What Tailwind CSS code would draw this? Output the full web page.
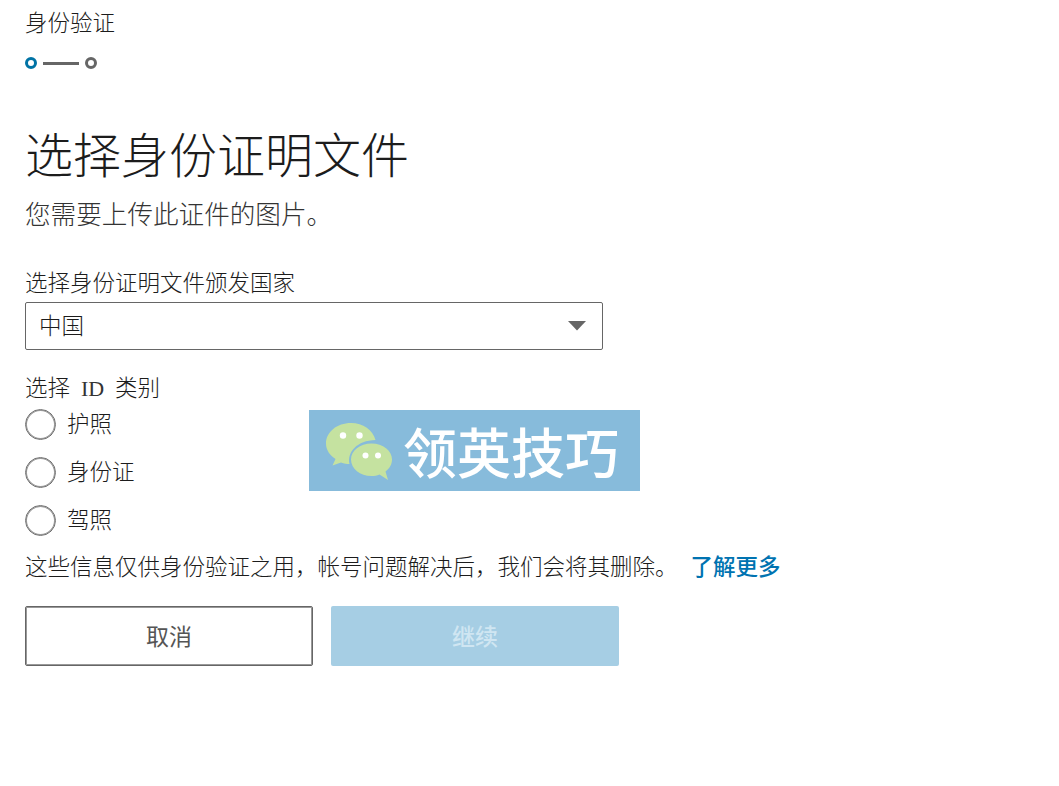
<!DOCTYPE html>
<html lang="zh-CN">
<head>
  <meta charset="UTF-8">
  <title>身份验证</title>
  <script src="https://cdn.jsdelivr.net/npm/@tailwindcss/browser@4"></script>
</head>
<body class="bg-white text-[#1c1c1c] font-['Noto_Sans_CJK_SC',sans-serif] font-light text-[22.5px] leading-8 whitespace-nowrap overflow-hidden">

  <main class="pl-[25px] pt-[5px]">
    <!-- Progress -->
    <p>身份验证</p>
    <div class="flex items-center gap-1.5 h-3 mt-5">
      <span class="size-3 rounded-full border-3 border-[#0073a5]"></span>
      <span class="w-9 h-[3px] bg-[#666]"></span>
      <span class="size-3 rounded-full border-3 border-[#666]"></span>
    </div>

    <h1 class="text-[48px] leading-[60px] mt-[53px]">选择身份证明文件</h1>
    <p class="text-[25.6px] leading-9 mt-[13px] text-[#333]">您需要上传此证件的图片。</p>

    <form>
      <!-- Country -->
      <label class="block mt-[34px]">选择身份证明文件颁发国家</label>
      <div class="w-[578px] h-12 mt-[5px] pl-[13px] pr-4 flex items-center justify-between border border-[#666] rounded-xs">
        <span class="pb-1">中国</span>
        <svg class="w-[18px] h-[10px]" viewBox="0 0 18 10" fill="#666"><path d="M0 0h18L9 9.5z"/></svg>
      </div>

      <!-- ID type -->
      <div class="relative mt-5">
        <p class="h-8">选择<span class="inline-block w-[45px] text-center font-['Liberation_Serif',serif] text-[22px] leading-none text-[#333]">ID</span>类别</p>
        <div class="flex flex-col gap-[17px] mt-[7px]">
          <label class="flex items-center gap-[11px] h-[31px]"><span class="size-[31px] rounded-full border border-[#707070] inset-ring inset-ring-[#999]"></span><span class="pb-1.5">护照</span></label>
          <label class="flex items-center gap-[11px] h-[31px]"><span class="size-[31px] rounded-full border border-[#707070] inset-ring inset-ring-[#999]"></span><span class="pb-1.5">身份证</span></label>
          <label class="flex items-center gap-[11px] h-[31px]"><span class="size-[31px] rounded-full border border-[#707070] inset-ring inset-ring-[#999]"></span><span class="pb-1.5">驾照</span></label>
        </div>

        <!-- Watermark over the form -->
        <div class="absolute left-[284px] top-10 w-[331px] h-[81px] bg-[#87bbdb] flex items-center pl-[17px]">
          <svg class="w-[66px] h-[58px] mt-0.5" viewBox="0 0 66 58">
            <path fill="#c5e2a0" d="M25 0C11 0 0 9 0 20.500C0 27 4 32.500 9.500 36L6.500 42.500L15 39.500C18 40.500 21 41 23.500 41C21 29 31 17.500 49.500 17C47 7 37 0 25 0z"/>
            <path fill="#c5e2a0" d="M45.500 20.500C34 20.500 25 27.500 25 36.500C25 45.500 34 53 45.500 53C48.500 53 51 52.500 53.500 51.500L62 57L59.500 48.500C63.500 45.500 66 41.500 66 36.500C66 27.500 57 20.500 45.500 20.500z"/>
            <g fill="#fff">
              <circle cx="17" cy="12.500" r="3.200"/>
              <circle cx="33.500" cy="12.500" r="3.200"/>
              <circle cx="39.500" cy="32.500" r="3"/>
              <circle cx="52" cy="32.500" r="3"/>
            </g>
          </svg>
          <span class="ml-[11px] text-white font-medium text-[54px] leading-none">领英技巧</span>
        </div>
      </div>

      <p class="mt-[13px]">这些信息仅供身份验证之用，帐号问题解决后，我们会将其删除。<a href="#" class="ml-[13px] font-medium text-[#0073b1]">了解更多</a></p>

      <div class="flex gap-[18px] mt-[25px] text-[23px]">
        <button type="button" class="w-72 h-[60px] pb-0.5 rounded-xs border border-[#666] inset-ring inset-ring-[#999] text-[#555] font-normal">取消</button>
        <button type="button" class="w-72 h-[60px] pb-0.5 rounded-xs bg-[#a6cee4] text-[#d0e6f2] font-medium">继续</button>
      </div>
    </form>
  </main>

</body>
</html>
